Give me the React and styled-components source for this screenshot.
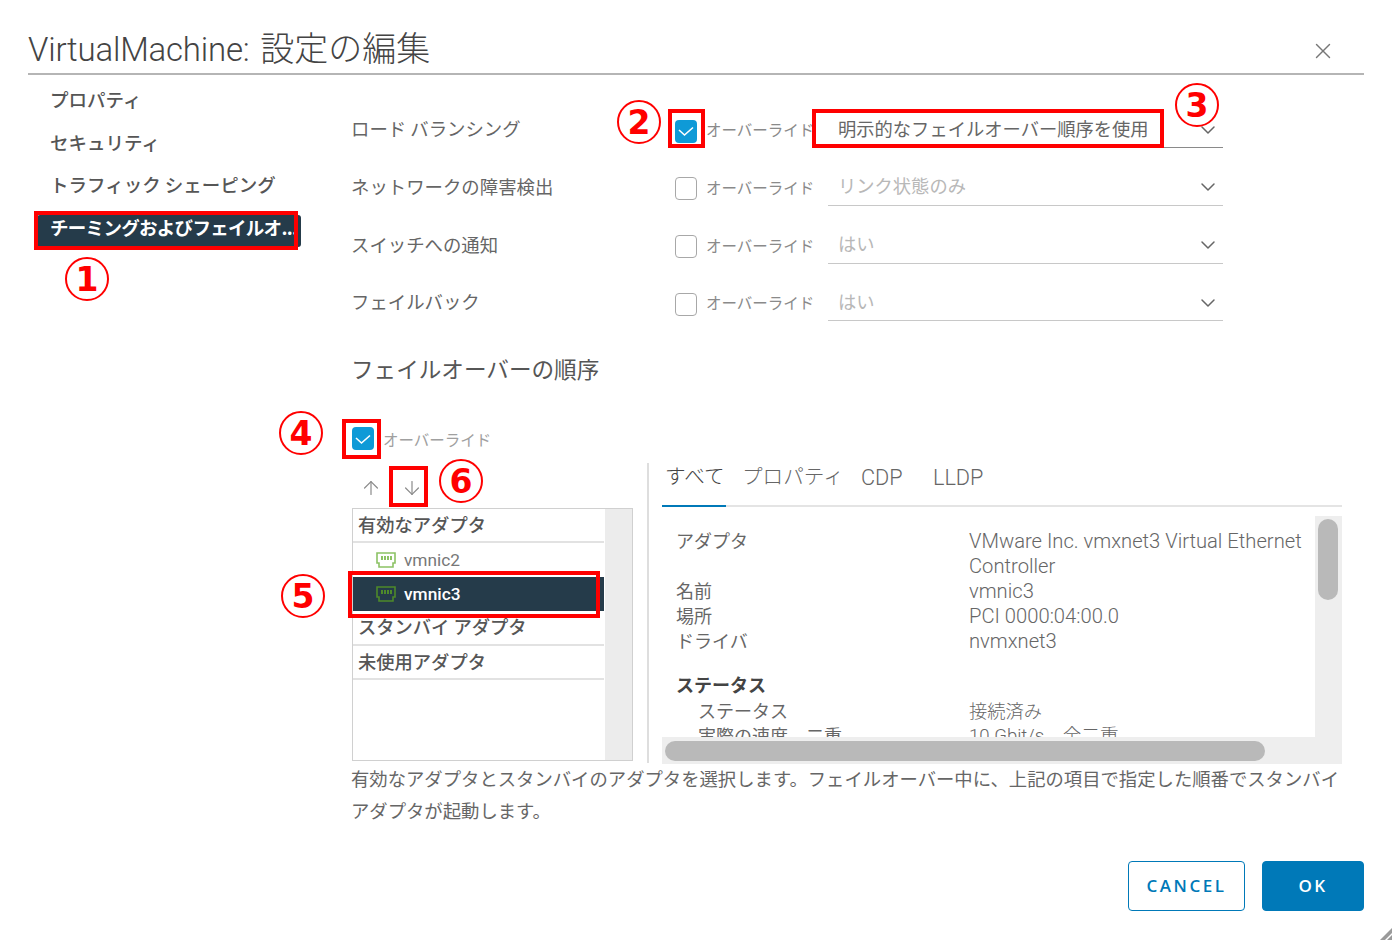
import React from 'react';
import styled, { createGlobalStyle } from 'styled-components';
import { ChevronDown, X, ArrowUp, ArrowDown } from 'lucide-react';

const CJK = '"Noto Sans CJK JP", sans-serif';
const LATIN = 'Roboto, "Noto Sans CJK JP", sans-serif';

const GlobalStyle = createGlobalStyle`
  html, body {
    margin: 0;
    padding: 0;
    background: #fff;
  }
  body {
    font-family: ${CJK};
    color: #565656;
  }
  * {
    box-sizing: border-box;
  }
`;

const Page = styled.div`
  position: relative;
  width: 1392px;
  height: 944px;
  overflow: hidden;
  background: #fff;
`;

const Header = styled.header`
  display: flex;
  justify-content: space-between;
  align-items: center;
  height: 75px;
  margin: 0 28px;
  padding: 26px 28px 0 0;
  border-bottom: 2px solid #b5b5b5;
`;

const Title = styled.h1`
  margin: 0;
  font-family: ${LATIN};
  font-size: 33px;
  font-weight: 300;
  line-height: 40px;
  color: #444;
  letter-spacing: -0.2px;
  word-spacing: 3px;
`;

const TitleJa = styled.span`
  font-size: 34px;
  letter-spacing: 0;
`;

const CloseButton = styled.div`
  display: flex;
  margin-top: 3px;
  color: #777;
`;

const Body = styled.div`
  display: flex;
`;

const Nav = styled.nav`
  flex: 0 0 351px;
  display: flex;
  flex-direction: column;
  gap: 10.67px;
  padding: 12px 0 0 37px;
`;

const NavItem = styled.div`
  width: 264px;
  height: 32px;
  padding: 0 0 6px 13px;
  border-radius: 3px;
  font-size: 18.5px;
  font-weight: ${(p) => (p.$active ? 700 : 500)};
  line-height: 24px;
  white-space: nowrap;
  overflow: hidden;
  letter-spacing: ${(p) => (p.$active ? '-0.7px' : '0')};
  color: ${(p) => (p.$active ? '#fff' : '#565656')};
  background: ${(p) => (p.$active ? '#253b4a' : 'transparent')};
`;

const Form = styled.main`
  flex: 1;
  padding-top: 25px;
`;

const Row = styled.div`
  display: flex;
  height: 57.8px;
`;

const RowLabel = styled.div`
  flex: 0 0 324px;
  font-size: 18.4px;
  line-height: 56px;
  color: #666;
`;

const OverrideCell = styled.label`
  flex: 0 0 153px;
  display: flex;
  align-items: center;
  gap: 9px;
  height: 58px;
`;

const Box = styled.span`
  display: flex;
  align-items: center;
  justify-content: center;
  width: 22px;
  height: 23px;
  flex: none;
  border-radius: 4px;
  border: ${(p) => (p.$checked ? 'none' : '1.5px solid #a8a8a8')};
  background: ${(p) => (p.$checked ? '#0e9ad7' : '#fff')};
  color: #fff;
`;

const RowBox = styled(Box)`
  margin-top: 4px;
`;

const OverrideText = styled.span`
  font-size: 15.5px;
  line-height: 22px;
  white-space: nowrap;
  color: ${(p) => (p.$light ? '#a0a0a0' : '#8a8a8a')};
`;

const Select = styled.div`
  flex: 0 0 395px;
  display: flex;
  justify-content: space-between;
  align-items: center;
  height: 48px;
  padding: 8px 3px 0 10px;
  border-bottom: ${(p) => (p.$active ? '1.5px solid #8a8a8a' : '1.5px solid #c8c8c8')};
  font-size: 18.3px;
  color: ${(p) => (p.$active ? '#666' : '#b8b8b8')};
`;

const SelectArrow = styled.span`
  display: flex;
  margin-top: 4px;
  color: #666;
`;

const SectionTitle = styled.h2`
  margin: 21.8px 0 0;
  font-size: 22.6px;
  font-weight: 400;
  line-height: 32px;
  color: #565656;
`;

const FailoverOverride = styled.label`
  display: flex;
  align-items: center;
  gap: 9px;
  height: 24px;
  margin: 42px 0 12px 1px;
`;

const Split = styled.div`
  display: flex;
  height: 300px;
  margin-left: 1px;
`;

const AdapterColumn = styled.div`
  flex: 0 0 281px;
  display: flex;
  flex-direction: column;
`;

const ArrowBar = styled.div`
  display: flex;
  align-items: center;
  gap: 19px;
  height: 45px;
  padding: 6px 0 0 8px;
  color: #8a8a8a;
`;

const AdapterList = styled.div`
  display: flex;
  height: 253px;
  border: 1.5px solid #d0d0d0;
`;

const AdapterRows = styled.div`
  flex: 0 0 250.5px;
`;

const ListScroll = styled.div`
  flex: 1;
  margin-left: 1.5px;
  background: #ececec;
`;

const GroupRow = styled.div`
  height: 34.5px;
  padding-left: 5px;
  border-bottom: 2px solid #e2e2e2;
  font-size: 18.3px;
  font-weight: 500;
  line-height: 30px;
  color: #565656;
`;

const NicRow = styled.div`
  display: flex;
  align-items: center;
  gap: 8px;
  height: 34px;
  padding: 0 0 0 23px;
  font-family: ${LATIN};
  font-size: 17.3px;
  font-weight: ${(p) => (p.$selected ? 500 : 400)};
  color: ${(p) => (p.$selected ? '#fff' : '#777')};
  background: ${(p) => (p.$selected ? '#253b4a' : 'transparent')};
`;

const Divider = styled.div`
  flex: none;
  width: 2px;
  margin: 0 13px 0 14px;
  background: #dedede;
`;

const DetailColumn = styled.section`
  flex: 0 0 680px;
  display: flex;
  flex-direction: column;
`;

const Tabs = styled.div`
  display: flex;
  height: 44px;
  border-bottom: 2px solid #e4e4e4;
`;

const Tab = styled.div`
  flex: none;
  width: ${(p) => p.$w}px;
  height: 44px;
  margin-right: ${(p) => p.$gap}px;
  padding-left: ${(p) => (p.$active ? 3 : 0)}px;
  border-bottom: 2px solid ${(p) => (p.$active ? '#0079b8' : 'transparent')};
  font-family: ${LATIN};
  font-size: ${(p) => p.$size}px;
  font-weight: 300;
  line-height: 29px;
  white-space: nowrap;
  color: ${(p) => (p.$active ? '#444' : '#666')};
`;

const DetailPane = styled.div`
  display: grid;
  grid-template-columns: 653px 27px;
  grid-template-rows: 221px 27px;
  margin-top: 9px;
`;

const DetailContent = styled.div`
  overflow: hidden;
  padding: 12px 0 0 14px;
  font-size: 18px;
  line-height: 25px;
  color: #666;
`;

const DetailRow = styled.div`
  display: flex;
`;

const DetailKey = styled.div`
  flex: 0 0 ${(p) => (p.$nested ? 271 : 293)}px;
  margin-left: ${(p) => (p.$nested ? 22 : 0)}px;
`;

const DetailValue = styled.div`
  flex: 1;
  margin: 1px 0 -1px;
  font-family: ${LATIN};
  font-weight: 300;
  font-size: ${(p) => p.$size || 20.2}px;
`;

const DetailHeading = styled.div`
  margin: 19px 0 1px;
  font-weight: 700;
  color: #444;
`;

const VScroll = styled.div`
  padding: 3px 4px 0 3px;
  background: #eee;
`;

const VThumb = styled.div`
  height: 81px;
  border-radius: 10px;
  background: #b9b9b9;
`;

const HScroll = styled.div`
  padding: 4px 0 2px 3px;
  background: #eee;
`;

const HThumb = styled.div`
  width: 600px;
  height: 20px;
  border-radius: 10px;
  background: #b9b9b9;
`;

const ScrollCorner = styled.div`
  background: #eee;
`;

const HelpText = styled.p`
  width: 1000px;
  margin: -1px 0 0;
  font-size: 18.35px;
  line-height: 32px;
  color: #666;
`;

const Footer = styled.footer`
  display: flex;
  justify-content: flex-end;
  gap: 17px;
  margin-top: 35px;
  padding-right: 28px;
`;

const Button = styled.button`
  width: ${(p) => (p.$primary ? 102 : 117)}px;
  height: 50px;
  padding: 0;
  border: 1.5px solid #0079b8;
  border-radius: 4px;
  background: ${(p) => (p.$primary ? '#0079b8' : '#fff')};
  color: ${(p) => (p.$primary ? '#fff' : '#0079b8')};
  font-family: "Open Sans", sans-serif;
  font-size: 17px;
  font-weight: 600;
  letter-spacing: 2.5px;
`;

const ResizeGrip = styled.svg`
  position: absolute;
  right: 0;
  bottom: 4px;
`;

const RedBox = styled.div`
  position: absolute;
  left: ${(p) => p.$x}px;
  top: ${(p) => p.$y}px;
  width: ${(p) => p.$w}px;
  height: ${(p) => p.$h}px;
  border: 4px solid #f00;
`;

const Marker = styled.div`
  position: absolute;
  left: ${(p) => p.$x - 22}px;
  top: ${(p) => p.$y - 22}px;
  display: flex;
  align-items: center;
  justify-content: center;
  width: 44px;
  height: 44px;
  border: 2px solid #f00;
  border-radius: 50%;
  background: #fff;
  font-family: "DejaVu Sans", sans-serif;
  font-size: 33px;
  font-weight: 700;
  color: #f00;
`;

const CheckMark = () => (
  <svg width="16" height="12" viewBox="0 0 16 12" fill="none" stroke="currentColor" strokeWidth="1.6">
    <path d="M1 5l5.5 5L15 2.5" />
  </svg>
);

const NicIcon = ({ color }) => (
  <svg width="20" height="16" viewBox="0 0 20 16" fill="none" stroke={color} strokeWidth="1.6">
    <path d="M1 1h18v10h-2v4H3v-4H1z" />
    <path d="M6 4v4M9 4v4M12 4v4M15 4v4" strokeWidth="2" />
  </svg>
);

const selectRows = [
  { label: 'ロード バランシング', value: '明示的なフェイルオーバー順序を使用', checked: true },
  { label: 'ネットワークの障害検出', value: 'リンク状態のみ' },
  { label: 'スイッチへの通知', value: 'はい' },
  { label: 'フェイルバック', value: 'はい' },
];

const details = [
  { key: 'アダプタ', value: 'VMware Inc. vmxnet3 Virtual Ethernet Controller' },
  { key: '名前', value: 'vmnic3' },
  { key: '場所', value: 'PCI 0000:04:00.0' },
  { key: 'ドライバ', value: 'nvmxnet3' },
];

const App = () => (
  <Page>
    <GlobalStyle />
    <Header>
      <Title>
        VirtualMachine: <TitleJa>設定の編集</TitleJa>
      </Title>
      <CloseButton>
        <X size={26} strokeWidth={1.3} />
      </CloseButton>
    </Header>
    <Body>
      <Nav>
        <NavItem>プロパティ</NavItem>
        <NavItem>セキュリティ</NavItem>
        <NavItem>トラフィック シェーピング</NavItem>
        <NavItem $active>チーミングおよびフェイルオ...</NavItem>
      </Nav>
      <Form>
        {selectRows.map((row) => (
          <Row key={row.label}>
            <RowLabel>{row.label}</RowLabel>
            <OverrideCell>
              <RowBox $checked={row.checked}>
                {row.checked && <CheckMark />}
              </RowBox>
              <OverrideText>オーバーライド</OverrideText>
            </OverrideCell>
            <Select $active={row.checked}>
              <span>{row.value}</span>
              <SelectArrow>
                <ChevronDown size={24} strokeWidth={1.5} />
              </SelectArrow>
            </Select>
          </Row>
        ))}
        <SectionTitle>フェイルオーバーの順序</SectionTitle>
        <FailoverOverride>
          <Box $checked>
            <CheckMark />
          </Box>
          <OverrideText $light>オーバーライド</OverrideText>
        </FailoverOverride>
        <Split>
          <AdapterColumn>
            <ArrowBar>
              <ArrowUp size={22} strokeWidth={1.3} />
              <ArrowDown size={22} strokeWidth={1.3} />
            </ArrowBar>
            <AdapterList>
              <AdapterRows>
                <GroupRow>有効なアダプタ</GroupRow>
                <NicRow>
                  <NicIcon color="#8cc264" />
                  vmnic2
                </NicRow>
                <NicRow $selected>
                  <NicIcon color="#4e8a2a" />
                  vmnic3
                </NicRow>
                <GroupRow>スタンバイ アダプタ</GroupRow>
                <GroupRow>未使用アダプタ</GroupRow>
              </AdapterRows>
              <ListScroll />
            </AdapterList>
          </AdapterColumn>
          <Divider />
          <DetailColumn>
            <Tabs>
              <Tab $active $w={64} $size={20.6} $gap={16}>すべて</Tab>
              <Tab $w={103} $size={20.6} $gap={16}>プロパティ</Tab>
              <Tab $w={42} $size={21.7} $gap={30}>CDP</Tab>
              <Tab $w={52} $size={21.7} $gap={0}>LLDP</Tab>
            </Tabs>
            <DetailPane>
              <DetailContent>
                {details.map((item) => (
                  <DetailRow key={item.key}>
                    <DetailKey>{item.key}</DetailKey>
                    <DetailValue>{item.value}</DetailValue>
                  </DetailRow>
                ))}
                <DetailHeading>ステータス</DetailHeading>
                <DetailRow>
                  <DetailKey $nested>ステータス</DetailKey>
                  <DetailValue $size={18.3}>接続済み</DetailValue>
                </DetailRow>
                <DetailRow>
                  <DetailKey $nested>実際の速度、二重</DetailKey>
                  <DetailValue $size={18.6}>10 Gbit/s、全二重</DetailValue>
                </DetailRow>
              </DetailContent>
              <VScroll>
                <VThumb />
              </VScroll>
              <HScroll>
                <HThumb />
              </HScroll>
              <ScrollCorner />
            </DetailPane>
          </DetailColumn>
        </Split>
        <HelpText>
          有効なアダプタとスタンバイのアダプタを選択します。フェイルオーバー中に、上記の項目で指定した順番でスタンバイアダプタが起動します。
        </HelpText>
      </Form>
    </Body>
    <Footer>
      <Button>CANCEL</Button>
      <Button $primary>OK</Button>
    </Footer>
    <ResizeGrip width="12" height="12" viewBox="0 0 12 12">
      <path d="M12 0v12H0z" fill="#9a9a9a" />
      <path d="M12 5v7H5z" fill="#fff" />
      <path d="M12 7v5H7z" fill="#9a9a9a" />
    </ResizeGrip>

    <RedBox $x={34} $y={211} $w={264} $h={39} />
    <RedBox $x={668} $y={109} $w={37} $h={39} />
    <RedBox $x={812} $y={109} $w={352} $h={39} />
    <RedBox $x={342} $y={419} $w={39} $h={40} />
    <RedBox $x={348} $y={571} $w={252} $h={47} />
    <RedBox $x={389} $y={466} $w={39} $h={41} />
    <Marker $x={87} $y={279}>1</Marker>
    <Marker $x={639} $y={122}>2</Marker>
    <Marker $x={1197} $y={105}>3</Marker>
    <Marker $x={301} $y={433}>4</Marker>
    <Marker $x={303} $y={596}>5</Marker>
    <Marker $x={461} $y={481}>6</Marker>
  </Page>
);

export default App;
